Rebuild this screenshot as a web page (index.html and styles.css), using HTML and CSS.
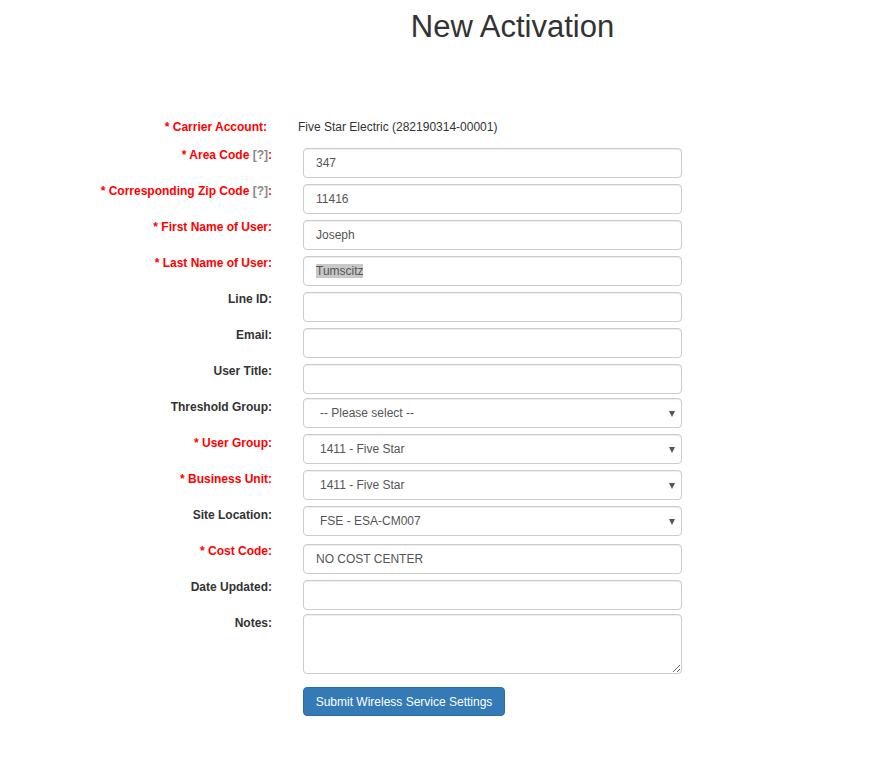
FILE: index.html
```html
<!DOCTYPE html>
<html>
<head>
<meta charset="utf-8">
<link rel="stylesheet" href="styles.css">
</head>
<body>
<div class="page">
  <h1 class="title">New Activation</h1>
  <form class="form">
    <div class="row static-row">
      <label class="lbl req lbl-static">* Carrier Account:</label>
      <div class="static-val">Five Star Electric (282190314-00001)</div>
    </div>
    <div class="row">
      <label class="lbl req">* Area Code <span class="help">[?]</span>:</label>
      <input class="ctl" type="text" value="347">
    </div>
    <div class="row">
      <label class="lbl req">* Corresponding Zip Code <span class="help">[?]</span>:</label>
      <input class="ctl" type="text" value="11416">
    </div>
    <div class="row">
      <label class="lbl req">* First Name of User:</label>
      <input class="ctl" type="text" value="Joseph">
    </div>
    <div class="row">
      <label class="lbl req">* Last Name of User:</label>
      <input class="ctl ctl-selected" type="text" value="Tumscitz">
    </div>
    <div class="row">
      <label class="lbl">Line ID:</label>
      <input class="ctl" type="text">
    </div>
    <div class="row">
      <label class="lbl">Email:</label>
      <input class="ctl" type="text">
    </div>
    <div class="row">
      <label class="lbl">User Title:</label>
      <input class="ctl" type="text">
    </div>
    <div class="row">
      <label class="lbl">Threshold Group:</label>
      <div class="sel-wrap"><select class="ctl sel"><option>-- Please select --</option></select></div>
    </div>
    <div class="row">
      <label class="lbl req">* User Group:</label>
      <div class="sel-wrap"><select class="ctl sel"><option>1411 - Five Star</option></select></div>
    </div>
    <div class="row">
      <label class="lbl req">* Business Unit:</label>
      <div class="sel-wrap"><select class="ctl sel"><option>1411 - Five Star</option></select></div>
    </div>
    <div class="row">
      <label class="lbl">Site Location:</label>
      <div class="sel-wrap"><select class="ctl sel"><option>FSE - ESA-CM007</option></select></div>
    </div>
    <div class="row">
      <label class="lbl req">* Cost Code:</label>
      <input class="ctl" type="text" value="NO COST CENTER">
    </div>
    <div class="row">
      <label class="lbl">Date Updated:</label>
      <input class="ctl" type="text">
    </div>
    <div class="row">
      <label class="lbl">Notes:</label>
      <textarea class="ctl area"></textarea>
    </div>
    <div class="row btn-row">
      <span></span>
      <button type="button" class="btn">Submit Wireless Service Settings</button>
    </div>
  </form>
</div>
</body>
</html>
```
FILE: styles.css
```css
* { box-sizing: border-box; }
html, body { margin: 0; padding: 0; background: #fff; }
body {
  font-family: "Liberation Sans", Arial, sans-serif;
  font-size: 12px;
  color: #333;
  width: 887px;
  height: 777px;
  overflow: hidden;
}
.page { padding-top: 10px; }
.title {
  margin: 0 0 0 138px;
  text-align: center;
  font-size: 31px;
  font-weight: normal;
  line-height: 33px;
  color: #333;
}
.form { margin-top: 77px; }
.row {
  display: grid;
  grid-template-columns: 272px 379px;
  column-gap: 31px;
  margin-bottom: 6px;
  align-items: start;
}
.static-row { margin-bottom: 0; height: 28px; }
.lbl {
  text-align: right;
  font-weight: bold;
  line-height: 14px;
  color: #333;
  white-space: nowrap;
}
.lbl.req { color: #f00; }
.lbl-static { padding-right: 5px; }
.help { color: #888; font-weight: bold; }
.static-val { margin-left: -5px; line-height: 14px; color: #333; }
.ctl {
  display: block;
  width: 379px;
  height: 30px;
  margin: 0;
  padding: 5px 12px;
  font-family: "Liberation Sans", Arial, sans-serif;
  font-size: 12px;
  color: #555;
  background: #fff;
  border: 1px solid #ccc;
  border-radius: 4px;
  box-shadow: inset 0 1px 1px rgba(0,0,0,.075);
  outline: none;
}
.ctl-selected {
  background: linear-gradient(#c8c8c8, #c8c8c8) no-repeat 12px 7px / 47px 14px, #fff;
}
.sel-wrap { position: relative; margin-top: -2px; margin-bottom: 2px; }
.sel {
  -webkit-appearance: none;
  appearance: none;
  padding-left: 16px;
}
.sel-wrap::after {
  content: "";
  position: absolute;
  right: 7px;
  top: 13px;
  border-left: 3.5px solid transparent;
  border-right: 3.5px solid transparent;
  border-top: 6px solid #555;
}
.area {
  height: 60px;
  margin-top: -2px;
  margin-bottom: 2px;
  resize: vertical;
}
.btn-row { margin-top: 11px; }
.btn {
  width: 202px;
  height: 29px;
  padding: 0;
  font-family: "Liberation Sans", Arial, sans-serif;
  font-size: 12px;
  white-space: nowrap;
  color: #fff;
  background: #337ab7;
  border: 1px solid #2e6da4;
  border-radius: 4px;
  text-align: center;
}
```
